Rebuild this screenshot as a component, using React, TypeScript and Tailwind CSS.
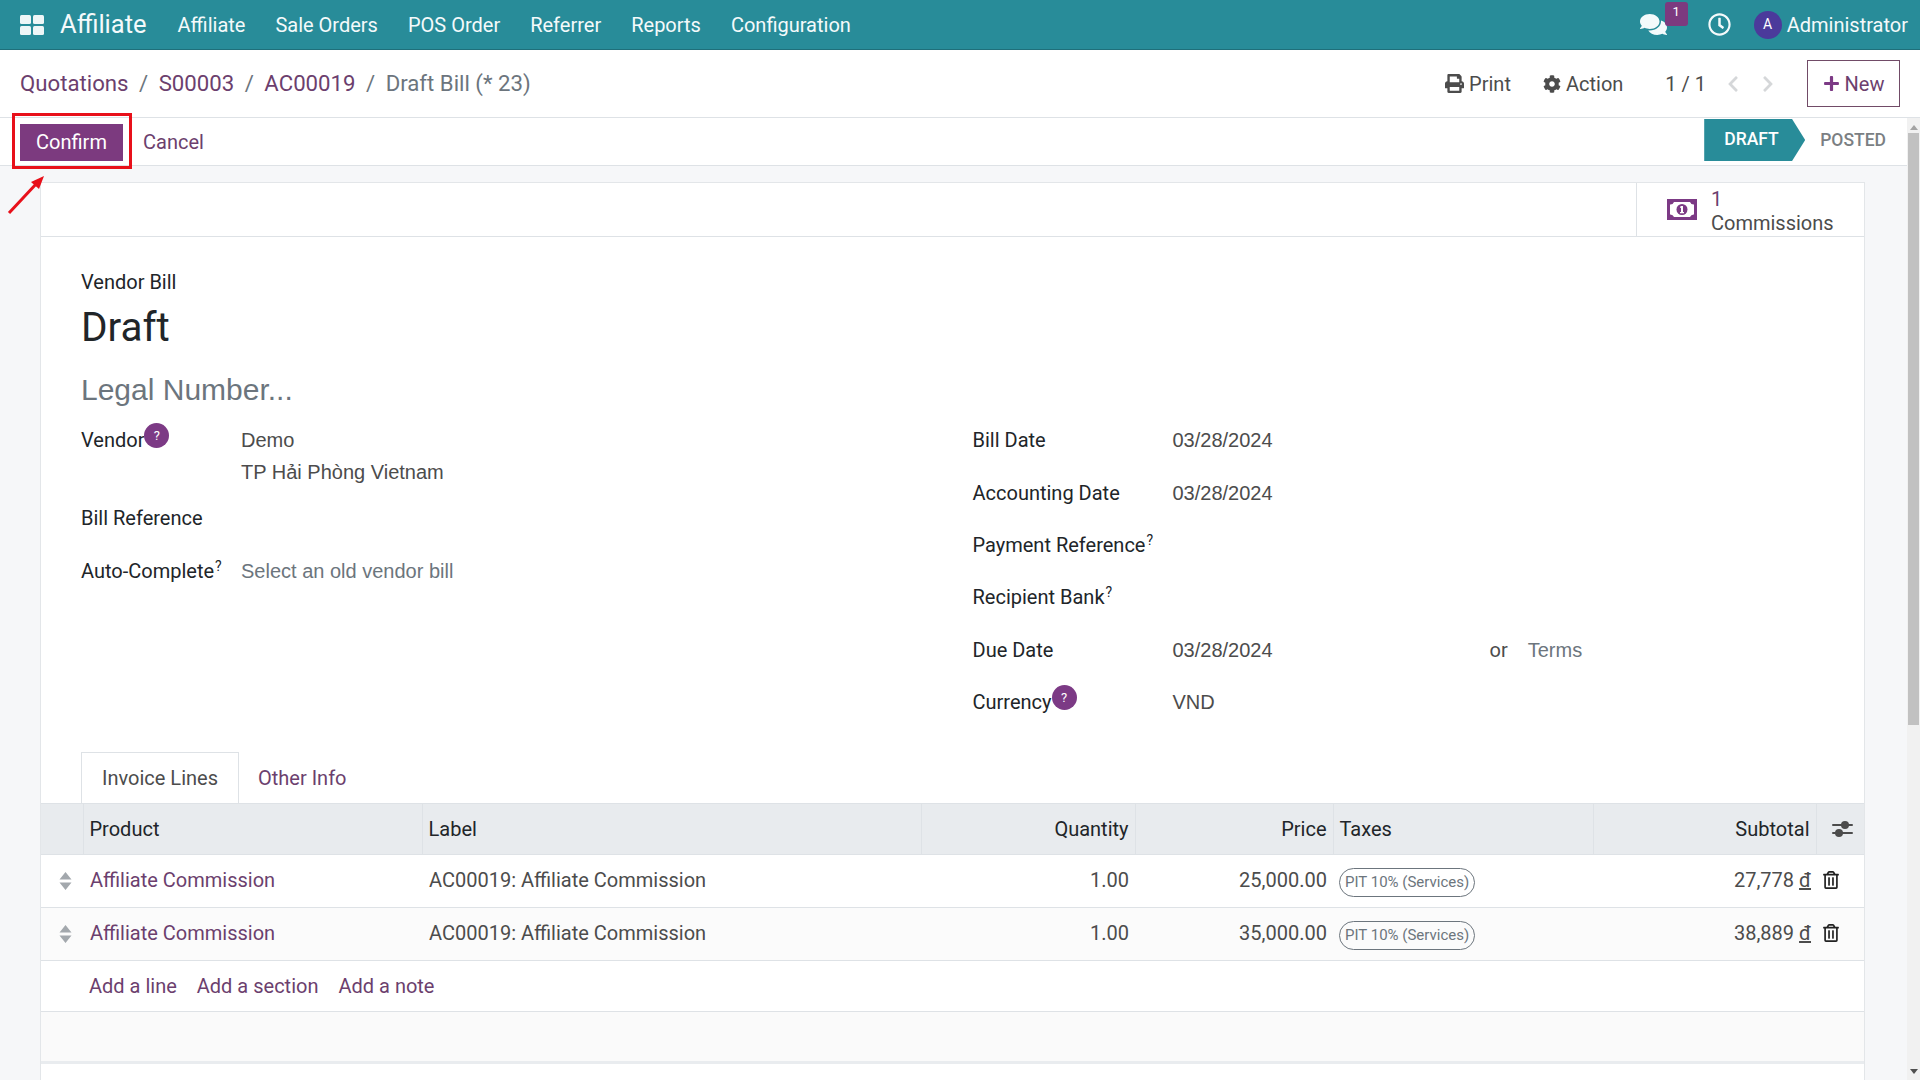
import {
  FaChevronLeft,
  FaChevronRight,
  FaCog,
  FaComments,
  FaPlus,
  FaPrint,
  FaRegClock,
  FaRegTrashAlt,
} from "react-icons/fa";

const MENU = ["Affiliate", "Sale Orders", "POS Order", "Referrer", "Reports", "Configuration"];

const LINES = [
  { price: "25,000.00", subtotal: "27,778", shaded: false },
  { price: "35,000.00", subtotal: "38,889", shaded: true },
];

// inputs in the form fall back to the browser's Arial look, not Roboto
const INPUT_FONT = "font-['Liberation_Sans',Arial,sans-serif]";

function HelpBadge() {
  return (
    <span className="relative -top-[7px] inline-flex size-[25px] items-center justify-center rounded-full bg-[#7c3a85] text-[13px] leading-none text-white">
      ?
    </span>
  );
}

function Sup() {
  return <sup className="ml-px text-[14px] text-[#212529]">?</sup>;
}

function AppsIcon() {
  return (
    <svg width="24" height="20" viewBox="0 0 24 20" fill="#eef6f7">
      <rect x="0" y="0" width="11" height="9" rx="1.500" />
      <rect x="13" y="0" width="11" height="9" rx="1.500" />
      <rect x="0" y="11" width="11" height="9" rx="1.500" />
      <rect x="13" y="11" width="11" height="9" rx="1.500" />
    </svg>
  );
}

function BillIcon() {
  return (
    <svg width="30" height="21" viewBox="0 0 30 21">
      <path fill="#7c3a85" fillRule="evenodd" d="M0 0h30v21H0zM3 5.500v10a4 4 0 0 1 4 2.500h16a4 4 0 0 1 4-2.500v-10a4 4 0 0 1-4-2.500H7a4 4 0 0 1-4 2.500z" />
      <circle cx="15" cy="10.500" r="5.500" fill="#7c3a85" />
      <path fill="#fff" d="M14 7h2v6h1v1.300h-4V13h1V8.600l-1 .5V8z" />
    </svg>
  );
}

function DragHandle() {
  return (
    <svg width="13" height="18" viewBox="0 0 13 18" fill="#a3a8ad">
      <path d="M6.500 0l6 7.500H.5zM6.500 18L.5 10.500h12z" />
    </svg>
  );
}

function SlidersIcon() {
  return (
    <svg width="21" height="20" viewBox="0 0 21 20" fill="#4c4c4c">
      <rect x="0" y="5" width="21" height="2" rx="1" />
      <rect x="0" y="13" width="21" height="2" rx="1" />
      <circle cx="13" cy="6" r="4" />
      <circle cx="7" cy="14" r="4" />
    </svg>
  );
}

function FormRow({ label, children, width }: { label: React.ReactNode; children?: React.ReactNode; width: string }) {
  return (
    <div className="flex h-[52.400px] items-center">
      <div className={`${width} shrink-0 text-[#212529]`}>{label}</div>
      {children}
    </div>
  );
}

export default function App() {
  return (
    <div className="flex h-screen flex-col overflow-hidden bg-white font-['Roboto',sans-serif] text-[20px] text-[#4c4c4c]">
      {/* Top navbar */}
      <nav className="flex h-[50px] shrink-0 items-center border-b border-[#1f6f7a] bg-[#288c99] pl-[20px] pr-[12px] text-[#f4fafb]">
        <AppsIcon />
        <span className="ml-[16px] text-[25.500px]">Affiliate</span>
        <div className="ml-[31px] flex gap-[30px]">
          {MENU.map((item) => (
            <span key={item}>{item}</span>
          ))}
        </div>
        <div className="ml-auto flex items-center">
          <div className="relative mr-[41px]">
            <FaComments size={27} className="text-[#f4fafb]" />
            <span className="absolute -right-[21px] -top-[9px] flex h-[24px] w-[23px] items-start justify-center rounded-[3px] bg-[#7c3a7f] text-[13px] leading-[20px] text-white">
              1
            </span>
          </div>
          <FaRegClock size={23} className="mr-[23px]" />
          <span className="mr-[5px] flex size-[28px] items-center justify-center rounded-full bg-[#4b3a9b] text-[14px] text-white">
            A
          </span>
          <span>Administrator</span>
        </div>
      </nav>

      {/* Breadcrumb and actions */}
      <div className="flex h-[68px] shrink-0 items-center border-b border-[#dee2e6] pl-[20px] pr-[20px]">
        <div className="flex gap-[10.500px] text-[22.200px]">
          <span className="text-[#6c3f6e]">Quotations</span>
          <span className="text-[#6c757d]">/</span>
          <span className="text-[#6c3f6e]">S00003</span>
          <span className="text-[#6c757d]">/</span>
          <span className="text-[#6c3f6e]">AC00019</span>
          <span className="text-[#6c757d]">/</span>
          <span className="text-[#6c757d]">Draft Bill (* 23)</span>
        </div>
        <div className="ml-auto flex items-center">
          <FaPrint size={19} className="mr-[5px]" />
          <span>Print</span>
          <FaCog size={18} className="ml-[32px] mr-[5px]" />
          <span>Action</span>
          <span className="ml-[42px]">1 / 1</span>
          <FaChevronLeft size={18} className="ml-[18px] text-[#d5d7d9]" />
          <FaChevronRight size={18} className="ml-[17px] text-[#d5d7d9]" />
          <button className="ml-[30px] flex h-[47px] w-[93px] items-center justify-center gap-[5px] border border-[#714b67] text-[#6c3f6e]">
            <FaPlus size={17} className="text-[#7c3a85]" />
            New
          </button>
        </div>
      </div>

      <div className="flex min-h-0 flex-1">
        <div className="min-w-0 flex-1">
          {/* Status bar */}
          <div className="flex h-[48px] items-start justify-between border-b border-[#dee2e6] pt-px">
            <div className="flex h-[42px] items-center pt-[4px]">
              <button className="ml-[20px] flex h-[37px] w-[103px] items-center justify-center bg-[#7c3a7f] text-white">
                Confirm
              </button>
              <span className="ml-[20px] text-[#6c3f6e]">Cancel</span>
            </div>
            <div className="flex items-center">
              <span className="flex h-[42px] w-[101px] items-center bg-[#288c99] pb-[1px] pl-[20px] text-[17.500px] font-medium text-white [clip-path:polygon(0_0,87%_0,100%_50%,87%_100%,0_100%)]">
                DRAFT
              </span>
              <span className="ml-[15px] mr-[21px] text-[17.500px] font-medium text-[#7b7f83]">POSTED</span>
            </div>
          </div>

          {/* Form */}
          <div className="h-full bg-[#f6f7f9] pl-[40px] pr-[42px] pt-[16px]">
            <div className="h-full border border-[#e3e6e9] bg-white">
              <div className="flex h-[54px] justify-end border-b border-[#dee2e6]">
                <div className="flex w-[228px] items-center gap-[14px] border-l border-[#dee2e6] pl-[30px]">
                  <BillIcon />
                  <div className="pt-[4px] leading-[23.500px]">
                    <div className="text-[#6c3f6e]">1</div>
                    <div>Commissions</div>
                  </div>
                </div>
              </div>

              <div className="pl-[40px] pt-[31px]">
                <div className="leading-[28px] text-[#212529]">Vendor Bill</div>
                <div className="mt-[5px] text-[40.500px] leading-[52px] text-[#212529]">Draft</div>
                <div className={`mt-[17px] text-[30px] leading-[40px] text-[#6c757d] ${INPUT_FONT}`}>Legal Number...</div>

                <div className="mt-[4px] flex">
                  <div className="w-[891.500px] shrink-0">
                    <div className="flex h-[78px] pt-[11px] leading-[31.500px]">
                      <div className="w-[160px] shrink-0 text-[#212529]">
                        Vendor
                        <HelpBadge />
                      </div>
                      <div className={INPUT_FONT}>
                        <div>Demo</div>
                        <div>TP Hải Phòng Vietnam</div>
                      </div>
                    </div>
                    <FormRow width="w-[160px]" label="Bill Reference" />
                    <FormRow
                      width="w-[160px]"
                      label={
                        <>
                          Auto-Complete
                          <Sup />
                        </>
                      }
                    >
                      <span className={`text-[#6c757d] ${INPUT_FONT}`}>Select an old vendor bill</span>
                    </FormRow>
                  </div>
                  <div className="flex-1">
                    <FormRow width="w-[200px]" label="Bill Date">
                      <span className={INPUT_FONT}>03/28/2024</span>
                    </FormRow>
                    <FormRow width="w-[200px]" label="Accounting Date">
                      <span className={INPUT_FONT}>03/28/2024</span>
                    </FormRow>
                    <FormRow
                      width="w-[200px]"
                      label={
                        <>
                          Payment Reference
                          <Sup />
                        </>
                      }
                    />
                    <FormRow
                      width="w-[200px]"
                      label={
                        <>
                          Recipient Bank
                          <Sup />
                        </>
                      }
                    />
                    <FormRow width="w-[200px]" label="Due Date">
                      <span className={`w-[317px] shrink-0 ${INPUT_FONT}`}>03/28/2024</span>
                      <span>or</span>
                      <span className={`ml-[20px] text-[#6c757d] ${INPUT_FONT}`}>Terms</span>
                    </FormRow>
                    <FormRow
                      width="w-[200px]"
                      label={
                        <>
                          Currency
                          <HelpBadge />
                        </>
                      }
                    >
                      <span className={INPUT_FONT}>VND</span>
                    </FormRow>
                  </div>
                </div>

                {/* Tabs */}
                <div className="mt-[24px] flex h-[51px]">
                  <span className="z-10 flex w-[158px] items-center justify-center border border-b-0 border-[#dee2e6] bg-white">
                    Invoice Lines
                  </span>
                  <span className="ml-[19px] flex items-center text-[#6c3f6e]">Other Info</span>
                </div>
              </div>

              {/* Invoice lines */}
              <table className="w-full table-fixed border-collapse">
                <colgroup>
                  <col className="w-[42px]" />
                  <col className="w-[339px]" />
                  <col className="w-[499px]" />
                  <col className="w-[214px]" />
                  <col className="w-[198px]" />
                  <col className="w-[260px]" />
                  <col className="w-[223px]" />
                  <col className="w-[48px]" />
                </colgroup>
                <thead>
                  <tr className="h-[51px] border-y border-[#dee2e6] bg-[#e8ebee] text-[#212529]">
                    <th className="font-normal" />
                    <th className="border-l border-[#dee2e6] pl-[6px] text-left font-normal">Product</th>
                    <th className="border-l border-[#dee2e6] pl-[6px] text-left font-normal">Label</th>
                    <th className="border-l border-[#dee2e6] pr-[6px] text-right font-normal">Quantity</th>
                    <th className="border-l border-[#dee2e6] pr-[6px] text-right font-normal">Price</th>
                    <th className="border-l border-[#dee2e6] pl-[6px] text-left font-normal">Taxes</th>
                    <th className="border-l border-[#dee2e6] pr-[6px] text-right font-normal">Subtotal</th>
                    <th className="border-l border-[#dee2e6] font-normal">
                      <div className="flex justify-center pl-[5px]">
                        <SlidersIcon />
                      </div>
                    </th>
                  </tr>
                </thead>
                <tbody>
                  {LINES.map((line) => (
                    <tr key={line.price} className={`h-[53px] border-b border-[#dee2e6] ${line.shaded ? "bg-[#fbfbfb]" : ""}`}>
                      <td>
                        <div className="flex justify-center pl-[7px]">
                          <DragHandle />
                        </div>
                      </td>
                      <td className="pb-[2px] pl-[7px] text-[#6c3f6e]">Affiliate Commission</td>
                      <td className="pb-[2px] pl-[7px]">AC00019: Affiliate Commission</td>
                      <td className="pb-[2px] pr-[6px] text-right">1.00</td>
                      <td className="pb-[2px] pr-[6px] text-right">{line.price}</td>
                      <td className="pl-[6px]">
                        <span className="inline-block rounded-full border border-[#6c757d] px-[5px] text-[15px] leading-[27px] text-[#6c757d]">
                          PIT 10% (Services)
                        </span>
                      </td>
                      <td className="pb-[2px] pr-[5px] text-right">
                        {line.subtotal} <span className="underline">đ</span>
                      </td>
                      <td className="pb-[2px]">
                        <FaRegTrashAlt size={18} className="ml-[6px] text-[#222]" />
                      </td>
                    </tr>
                  ))}
                </tbody>
              </table>
              <div className="flex h-[51px] items-center gap-[20px] border-b border-[#dee2e6] pl-[48px] text-[#6c3f6e]">
                <span>Add a line</span>
                <span>Add a section</span>
                <span>Add a note</span>
              </div>
              <div className="h-[52px] border-b-[3px] border-[#e9ecef] bg-[#fafafa]" />
            </div>
          </div>
        </div>

        {/* Scrollbar */}
        <div className="flex w-[13px] shrink-0 flex-col items-center bg-[#f1f1f1]">
          <span className="mt-[7px] size-0 border-x-[4px] border-b-[5px] border-x-transparent border-b-[#a3a3a3]" />
          <span className="mt-[3px] h-[592px] w-[11px] bg-[#c1c1c1]" />
          <span className="mb-[6px] mt-auto size-0 border-x-[4px] border-t-[5px] border-x-transparent border-t-[#505050]" />
        </div>
      </div>

      {/* Red annotation around Confirm */}
      <div className="absolute left-[12px] top-[113px] h-[56px] w-[120px] border-[3px] border-[#e8101a]" />
      <svg className="absolute left-[7px] top-[174px]" width="40" height="42" viewBox="0 0 40 42">
        <path d="M2 39L30 9" stroke="#e8101a" strokeWidth="3" fill="none" />
        <path d="M37 2L32 15L24 8z" fill="#e8101a" />
      </svg>
    </div>
  );
}
